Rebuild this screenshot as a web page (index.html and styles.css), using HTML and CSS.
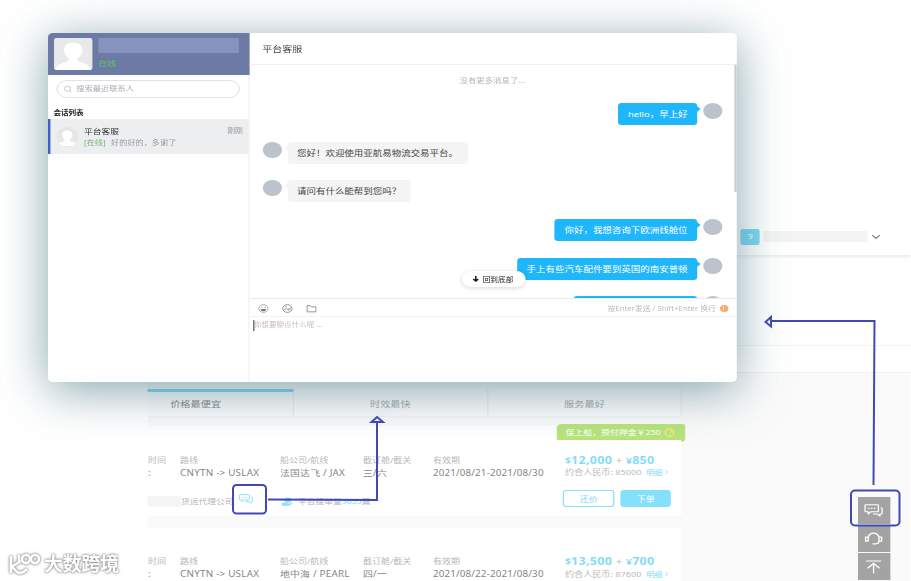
FILE: index.html
```html
<!DOCTYPE html>
<html lang="zh-CN">
<head>
  <meta charset="UTF-8" />
  <meta name="viewport" content="width=device-width, initial-scale=1.0"/>
  <title>平台客服</title>
  <link rel="stylesheet" href="styles.css">
</head>
<body>

<svg class="symbols" width="0" height="0">
  <symbol id="chat" viewBox="0 0 18 16">
    <path d="M2 1.500h10.500q1 0 1 1v6q0 1-1 1H6.200L4 12V9.500H2q-1 0-1-1v-6q0-1 1-1z M15.500 5h.7q.8 0 .8.8v5.400q0 .8-.8.8H15v2.200L12.600 12H8.500" fill="none" stroke="currentColor" stroke-width="1.200" stroke-linejoin="round"/>
    <path d="M4 5.600h1.300M6.600 5.600h1.300M9.200 5.600h1.300" stroke="currentColor" stroke-width="1.300"/>
  </symbol>
  <symbol id="person" viewBox="0 0 32 32">
    <path fill="#fff" d="M16 4.500c4.800 0 7.700 3 7.700 7.500 0 3.300-1.700 6.700-3.800 8.300v2.400C22 25 29.500 24.500 31 32H1c1.500-7.500 9-7 11.100-9.300v-2.400C10 18.700 8.300 15.300 8.300 12c0-4.500 2.900-7.500 7.700-7.500z"/>
  </symbol>
</svg>

<div class="stage">
  <div class="page">
    <header class="topbar">
      <span class="badge">9</span>
      <span class="account"></span>
      <svg class="chevron" viewBox="0 0 8 6"><path d="M.8 1.200 4 4.500l3.200-3.300" fill="none" stroke="#888" stroke-width="1.200"/></svg>
    </header>
    <div class="filter"></div>
    <div class="filter-foot"></div>

    <main class="results">
      <div class="tabs">
        <div class="tab active">价格最便宜</div>
        <div class="tab">时效最快</div>
        <div class="tab">服务最好</div>
      </div>

      <div class="card">
        <div class="tag">保上船，预付押金￥250 <span class="help">?</span></div>
        <div class="cols">
          <div><label>时间</label><b>:</b></div>
          <div><label>路线</label><b>CNYTN -&gt; USLAX</b></div>
          <div><label>船公司/航线</label><b>法国达飞 / JAX</b></div>
          <div><label>截订舱/截关</label><b>三/六</b></div>
          <div><label>有效期</label><b class="date">2021/08/21-2021/08/30</b></div>
          <div class="price">
            <p><small>$</small><strong>12,000</strong> + <small>¥</small><strong>850</strong></p>
            <span>约合人民币: 85000</span><a>明细 <svg viewBox="0 0 4 7"><path d="M.7.8 3.200 3.500.7 6.200" fill="none" stroke="#84dcf8"/></svg></a>
          </div>
        </div>
        <div class="foot">
          <span class="mask"></span>
          <span class="agent">货运代理公司</span>
          <svg class="talk"><use href="#chat"/></svg>
          <svg class="level" viewBox="0 0 10 10"><circle cx="5.500" cy="3.500" r="3" fill="#8fdcf7"/><path d="M0 6.500h4l2 1 3-1 .8 1L6 9.700H0z" fill="#8fdcf7"/></svg>
          <span class="orders">平台接单量<em>3655</em>篇</span>
          <button class="btn ghost">还价</button>
          <button class="btn">下单</button>
        </div>
      </div>

      <div class="card">
        <div class="cols">
          <div><label>时间</label><b>:</b></div>
          <div><label>路线</label><b>CNYTN -&gt; USLAX</b></div>
          <div><label>船公司/航线</label><b>地中海 / PEARL</b></div>
          <div><label>截订舱/截关</label><b>四/一</b></div>
          <div><label>有效期</label><b class="date">2021/08/22-2021/08/30</b></div>
          <div class="price">
            <p><small>$</small><strong>13,500</strong> + <small>¥</small><strong>700</strong></p>
            <span>约合人民币: 87600</span><a>明细 <svg viewBox="0 0 4 7"><path d="M.7.8 3.200 3.500.7 6.200" fill="none" stroke="#84dcf8"/></svg></a>
          </div>
        </div>
      </div>
    </main>
  </div>

  <nav class="side-tools">
    <div><svg viewBox="0 0 18 16"><use href="#chat"/></svg></div>
    <div><svg viewBox="0 0 18 16"><path d="M4 11V7a5 5 0 0 1 10 0v4M4 6.500H1.500v4.500H4M14 6.500h2.500v4.500H14M14 11q0 3-4 3H8" fill="none" stroke="#fff" stroke-width="1.300"/></svg></div>
    <div><svg viewBox="0 0 18 16"><path d="M2 1.800h14M9 15.500V4.500M3.500 10 9 4.500l5.500 5.500" fill="none" stroke="#fff" stroke-width="1.300"/></svg></div>
  </nav>

  <section class="chat">
    <aside class="sidebar">
      <div class="me">
        <svg class="photo" viewBox="0 0 32 32" preserveAspectRatio="none"><use href="#person"/></svg>
        <div class="me-info">
          <div class="me-name"></div>
          <div class="me-state">在线</div>
        </div>
      </div>
      <div class="search">
        <svg viewBox="0 0 10 10"><circle cx="4.700" cy="4.700" r="3.700" fill="none" stroke="#b5b9c2"/><path d="M7.300 7.300 9.200 9.200" stroke="#b5b9c2"/></svg>
        搜索最近联系人
      </div>
      <h4>会话列表</h4>
      <div class="session">
        <svg class="face" viewBox="0 0 32 32"><use href="#person"/></svg>
        <div class="session-text">
          <div class="line"><span class="who">平台客服</span><span class="when">刚刚</span></div>
          <div class="last"><i>[在线]</i>好的好的，多谢了</div>
        </div>
      </div>
    </aside>

    <div class="talkbox">
      <div class="talk-title">平台客服</div>
      <div class="messages">
        <div class="nomore">没有更多消息了...</div>
        <div class="msg mine"><p>hello，早上好</p><span class="dot"></span></div>
        <div class="msg"><span class="dot"></span><p>您好！欢迎使用亚航易物流交易平台。</p></div>
        <div class="msg"><span class="dot"></span><p>请问有什么能帮到您吗？</p></div>
        <div class="msg mine"><p>你好，我想咨询下欧洲线舱位</p><span class="dot"></span></div>
        <div class="msg mine"><p>手上有些汽车配件要到英国的南安普顿</p><span class="dot"></span></div>
        <div class="msg mine"><p class="next"></p><span class="dot"></span></div>
        <div class="scrollbar"></div>
        <div class="to-bottom"><svg viewBox="0 0 6 7"><path d="M3 0v6M.5 3.500 3 6l2.500-2.500" fill="none" stroke="#111" stroke-width="1.500"/></svg>回到底部</div>
      </div>
      <div class="toolbar">
        <svg viewBox="0 0 10 10"><circle cx="5" cy="5" r="4.300" fill="none" stroke="#999" stroke-width=".8"/><path d="M2.500 5.500h5a2.500 2.500 0 0 1-5 0z" fill="#777"/><path d="M3 3.500h1M6 3.500h1" stroke="#777"/></svg>
        <svg viewBox="0 0 10 10"><circle cx="5" cy="5" r="4.300" fill="none" stroke="#888" stroke-width=".9"/><path d="M1.500 7 4 5l1.500 1.200L8.800 4M3 3h1.500M5.500 6.500h2" fill="none" stroke="#888" stroke-width=".9"/></svg>
        <svg viewBox="0 0 10 10"><path d="M1 1.800h3l1 1.400h4.200v5.500H1z" fill="none" stroke="#888" stroke-width=".9"/></svg>
        <span class="hint">按Enter发送 / Shift+Enter 换行</span>
        <span class="info">i</span>
      </div>
      <div class="editor">你想要聊点什么呢 ...</div>
    </div>
  </section>
</div>

<svg class="guides" width="911" height="581" fill="none" stroke="#4149b5" stroke-width="2">
  <rect x="233" y="485" width="33" height="28.500" rx="3.500"/>
  <path d="M268 499.500 377 500V423"/>
  <path d="M371.500 422h11.500l-6-5z"/>
  <rect x="851" y="490.500" width="48.500" height="35" rx="4"/>
  <path d="M873.500 485 874.500 321H771"/>
  <path d="M771 317v9.500l-5.500-4.500z"/>
</svg>

<div class="watermark">
  <svg viewBox="0 0 34 24" fill="none" stroke="#fff" stroke-width="2.600"><path d="M3 4v17M13 9 4 14.500 9 20q5 2.500 10-3"/><circle cx="18" cy="7" r="4"/><circle cx="27" cy="7" r="4"/><path d="M11 3v6"/></svg>
  <span>大数跨境</span>
</div>

</body>
</html>
```

FILE: styles.css
```css
* {
  box-sizing: border-box;
}

body {
  margin: 0;
  width: 911px;
  height: 581px;
  overflow: hidden;
  position: relative;
  background: #fff;
  font-family: "Noto Sans", "Noto Sans CJK SC", sans-serif;
  white-space: nowrap;
}

p, h4 {
  margin: 0;
}

svg {
  display: block;
  flex: none;
}

.symbols {
  position: absolute;
}

/* everything on the stage is drawn 1.2 times as wide as it is laid out */
.stage {
  width: 759.2px;
  height: 581px;
  overflow: hidden;
  position: relative;
  transform: scaleX(1.2);
  transform-origin: 0 0;
}

/* page behind the chat */
.page {
  margin-left: 123.3px;
}

.topbar {
  height: 255px;
  padding: 0 25.3px 10px 0;
  display: flex;
  align-items: flex-end;
  justify-content: flex-end;
  box-shadow: 0 1px 4px rgba(0, 0, 0, 0.12);
  clip-path: inset(0 0 -6px 0);
}

.badge {
  width: 16px;
  height: 16px;
  border-radius: 2px;
  background: #7cd9f2;
  color: #fff;
  font-size: 7px;
  line-height: 16px;
  text-align: center;
}

.account {
  width: 87px;
  height: 11px;
  margin: 0 3px 3px 2.5px;
  background: #f4f4f4;
}

.chevron {
  width: 8px;
  height: 6px;
  margin-bottom: 5px;
}

.filter {
  height: 91px;
  border-bottom: 1px solid #f3f3f3;
}

.filter-foot {
  height: 26px;
}

.results {
  height: 209px;
  padding-top: 16px;
  background: #fafafa;
  border-top: 1px solid #f1f1f1;
}

.tabs {
  width: 445px;
  height: 28px;
  margin-bottom: 9px;
  display: grid;
  grid-template-columns: 121.5px 162px 161.5px;
  background: #fcfcfc;
  border-bottom: 1px solid #f3f3f3;
}

.tab {
  padding-top: 3px;
  border-right: 1px solid #eee;
  color: #aaa;
  font-size: 8.5px;
  line-height: 23px;
  text-align: center;
}

.tab.active {
  padding: 0 41px 0 0;
  border-top: 3px solid #84d8f2;
  color: #888;
}

.card {
  position: relative;
  width: 445px;
  height: 90px;
  margin-bottom: 11.5px;
  padding-top: 27.5px;
  background: #fff;
  border-radius: 3px;
}

.tag {
  position: absolute;
  left: 341px;
  top: -2px;
  width: 107px;
  height: 16px;
  padding-left: 7px;
  border-radius: 4px 2px 0 0;
  background: #b9e37c;
  color: #fff;
  font-size: 7.4px;
  line-height: 16px;
}

.tag::after {
  content: "";
  position: absolute;
  right: 0;
  bottom: -2px;
  border-top: 2px solid #a5cf68;
  border-right: 3px solid transparent;
}

.help {
  display: inline-block;
  width: 8px;
  height: 9px;
  margin-left: 2px;
  border: 1px solid #f5f07a;
  border-radius: 50%;
  color: #f5f07a;
  font-size: 6.5px;
  line-height: 7px;
  text-align: center;
}

.cols {
  display: grid;
  grid-template-columns: 26.7px 83.3px 69.2px 58.3px 110px 1fr;
}

.cols label {
  display: block;
  color: #b9b9b9;
  font-size: 7.5px;
  line-height: 13px;
}

.cols b {
  display: block;
  color: #858585;
  font-size: 8.2px;
  font-weight: 400;
  letter-spacing: 0.2px;
  line-height: 12.5px;
}

.cols .date {
  letter-spacing: 0.12px;
}

.price {
  height: 25.5px;
  color: #bbb;
  font-size: 7.6px;
  line-height: 10px;
}

.price p {
  height: 13.5px;
  font-size: 9.5px;
  line-height: 13.5px;
  word-spacing: 0.6px;
}

.price strong,
.price small {
  color: #84dcf8;
  font-size: 10.4px;
  font-weight: 700;
  letter-spacing: 0.25px;
}

.price small {
  font-size: 8.5px;
}

.price a {
  margin-left: 4px;
  color: #84dcf8;
  font-size: 6.8px;
}

.price a svg {
  display: inline-block;
  width: 3px;
  height: 6px;
}

.foot {
  display: flex;
  align-items: center;
  height: 17px;
  margin-top: 11px;
  color: #b5b5b5;
  font-size: 7.3px;
}

.mask {
  width: 27.5px;
  height: 11px;
  margin-top: 6px;
  background: #f5f5f5;
}

.agent {
  width: 48px;
  margin-top: 5px;
}

.talk {
  width: 12px;
  height: 12px;
  color: #84dcf8;
}

.level {
  width: 9px;
  height: 9px;
  margin: 5px 4px 0 24.5px;
}

.orders {
  flex: 1;
  margin-top: 5px;
}

.orders em {
  color: #84dcf8;
  font-style: normal;
}

.btn {
  width: 42.5px;
  height: 17px;
  margin-right: 9px;
  padding: 0;
  border: 1px solid #84e0fb;
  border-radius: 3px;
  background: #84e0fb;
  color: #fff;
  font-family: inherit;
  font-size: 7.5px;
  line-height: 14px;
}

.btn.ghost {
  margin-right: 5px;
  background: #fff;
  color: #7fd8f5;
}

.side-tools {
  position: absolute;
  left: 715px;
  top: 497px;
  display: grid;
  gap: 1px;
  width: 26.7px;
  color: #fff;
}

.side-tools div {
  display: grid;
  place-items: center;
  height: 27px;
  background: #a3a3a3;
}

.side-tools svg {
  width: 16px;
  height: 15px;
}

/* chat window */
.chat {
  position: absolute;
  left: 39.5px;
  top: 33px;
  width: 574px;
  height: 349px;
  display: flex;
  background: #fff;
  border-radius: 4px;
  box-shadow: 0 8px 44px rgba(55, 105, 120, 0.6);
}

.sidebar {
  width: 168px;
  border-right: 1px solid #f0f0f2;
}

.me {
  display: flex;
  gap: 5px;
  height: 42px;
  padding: 5px 9px 5px 5px;
  margin-right: -1px;
  background: #6c7aa5;
  border-radius: 4px 0 0 0;
}

.photo {
  width: 32px;
  height: 32px;
  border-radius: 2px;
  background: #e8e9ea;
}

.me-info {
  flex: 1;
}

.me-name {
  height: 15px;
  background: #8593bf;
}

.me-state {
  padding-left: 0.5px;
  color: #5ac95c;
  font-size: 7.4px;
  line-height: 20px;
}

.search {
  display: flex;
  align-items: center;
  gap: 3.5px;
  width: 153px;
  height: 18px;
  margin: 5px 0 0 7px;
  padding-left: 5.5px;
  border: 1px solid #dfe1e5;
  border-radius: 9px;
  color: #aaadb5;
  font-size: 6.9px;
  line-height: 14px;
}

.search svg {
  width: 7px;
  height: 8px;
}

h4 {
  height: 21px;
  padding: 9px 0 0 5px;
  color: #222;
  font-size: 6.3px;
  line-height: 12px;
}

.session {
  display: flex;
  align-items: center;
  gap: 5.5px;
  height: 35px;
  padding: 0 4px 0 5px;
  background: #edeef0;
  border-left: 2px solid #3c5fc9;
}

.face {
  width: 18px;
  height: 20px;
  border-radius: 50%;
  background: #e5e6e8;
}

.session-text {
  flex: 1;
  line-height: 12px;
}

.line {
  display: flex;
  justify-content: space-between;
}

.who {
  color: #333;
  font-size: 7.3px;
}

.when,
.last {
  color: #999ca3;
  font-size: 6.6px;
}

.last {
  font-size: 6.8px;
}

.last i {
  margin-right: 4.5px;
  color: #75b873;
  font-style: normal;
}

.talkbox {
  flex: 1;
  min-width: 0;
}

.talk-title {
  height: 32px;
  padding-left: 11px;
  border-bottom: 1px solid #eee;
  color: #444;
  font-size: 8.4px;
  line-height: 31px;
}

.messages {
  position: relative;
  height: 233px;
  overflow: hidden;
  padding: 0 11.5px 0 11px;
}

.nomore {
  height: 38px;
  color: #b9b4b2;
  font-size: 7px;
  line-height: 31px;
  text-align: center;
}

.msg {
  display: flex;
  align-items: flex-start;
  height: 38.7px;
}

.mine {
  justify-content: flex-end;
}

.dot {
  width: 16px;
  height: 16px;
  border-radius: 50%;
  background: #bdc2cd;
}

.msg p {
  position: relative;
  height: 22px;
  margin-left: 5px;
  padding: 0 8px;
  border-radius: 3px;
  background: #f4f4f4;
  color: #444;
  font-size: 7.9px;
  line-height: 22px;
}

.msg p::before {
  content: "";
  position: absolute;
  left: -2px;
  top: 4px;
  width: 4px;
  height: 4px;
  background: inherit;
  transform: rotate(45deg);
}

.mine p {
  margin: 0 5px 0 0;
  background: #20b6fb;
  color: #fff;
}

.mine p::before {
  left: auto;
  right: -2px;
}

.msg .next {
  width: 103px;
}

.scrollbar {
  position: absolute;
  right: 0;
  top: 0;
  width: 1.5px;
  height: 127px;
  background: #c9cccd;
}

.to-bottom {
  position: absolute;
  left: 177px;
  top: 206px;
  display: flex;
  align-items: center;
  justify-content: center;
  gap: 3px;
  width: 53px;
  height: 16px;
  border-radius: 8px;
  background: #fff;
  box-shadow: 0 1px 5px rgba(0, 0, 0, 0.16);
  color: #222;
  font-size: 6.4px;
}

.to-bottom svg {
  width: 5px;
  height: 6px;
}

.toolbar {
  display: flex;
  align-items: center;
  gap: 11px;
  height: 19px;
  padding: 1px 7px 0;
  border-top: 1px solid #eaeaea;
  border-bottom: 1px solid #f2f2f2;
}

.toolbar svg {
  width: 9px;
  height: 9px;
}

.hint {
  margin-left: auto;
  color: #bbb;
  font-size: 6.5px;
}

.info {
  width: 7px;
  height: 7px;
  margin-left: -8px;
  border-radius: 50%;
  background: #f6ad69;
  color: #fff;
  font-size: 5px;
  line-height: 7px;
  text-align: center;
}

.editor {
  width: 80px;
  height: 11px;
  margin: 3px 0 0 3px;
  border-left: 1px solid #555;
  color: #c9bcbc;
  font-size: 6.3px;
  line-height: 10px;
}

/* arrows and frames over the page */
.guides {
  position: absolute;
  left: 0;
  top: 0;
}

.watermark {
  position: absolute;
  left: 8px;
  top: 549px;
  display: flex;
  align-items: center;
  gap: 2px;
  color: #fff;
  font-size: 18.8px;
  font-weight: 700;
  line-height: 30px;
  filter: drop-shadow(0 0 1px #888) drop-shadow(0 0 1px #bbb);
}

.watermark svg {
  width: 34px;
  height: 24px;
}
```
